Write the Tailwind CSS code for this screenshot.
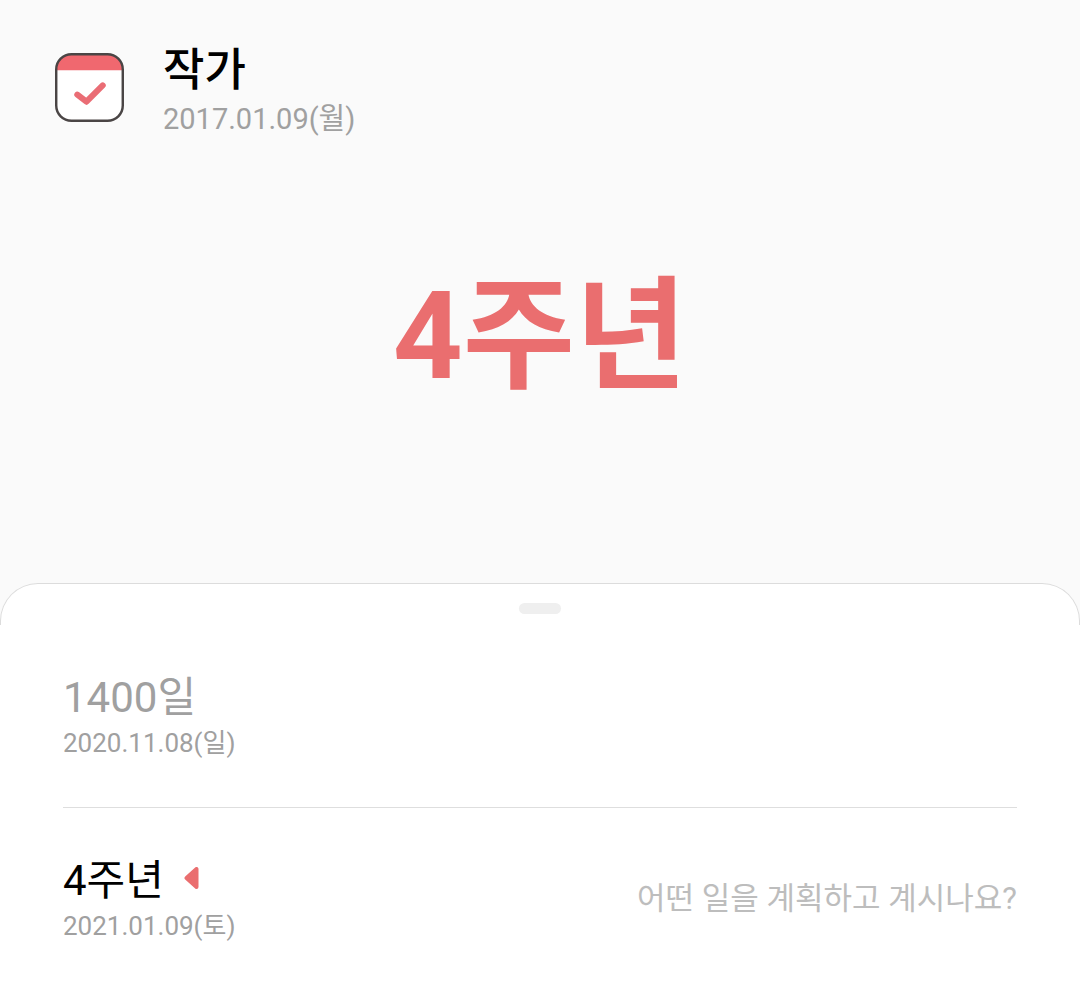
<!DOCTYPE html>
<html lang="ko">
<head>
  <meta charset="UTF-8">
  <title>작가</title>
  <meta name="viewport" content="width=device-width, initial-scale=1.0">
  <script src="https://cdn.jsdelivr.net/npm/@tailwindcss/browser@4"></script>
</head>
<body class="min-h-screen flex flex-col bg-[#fafafa] font-[Roboto,'Noto_Sans_CJK_KR',sans-serif]">
  <header class="flex items-start gap-[39px] px-[55px] pt-[42px]">
    <svg class="mt-[11px] size-[69px] shrink-0" viewBox="0 0 68 68" fill="none" aria-hidden="true">
      <rect x="1" y="1" width="66" height="66" rx="15" fill="#fff" />
      <path d="M1 17V16A15 15 0 0 1 16 1H52A15 15 0 0 1 67 16V17Z" fill="#f0686f" />
      <rect x="1.2" y="1.2" width="65.6" height="65.6" rx="15" stroke="#4a4545" stroke-width="2.4" />
      <path d="M22 41L31 48L47 32" stroke="#ea6d75" stroke-width="6" stroke-linecap="round" stroke-linejoin="round" />
    </svg>
    <div>
      <h1 class="text-[45px] leading-[58px] font-medium text-black">작가</h1>
      <p class="text-[29px] leading-[38px] text-[#a0a0a0]">2017.01.09(월)</p>
    </div>
  </header>

  <section class="flex h-[445px] items-center justify-center pb-12">
    <p class="text-[122px] leading-[160px] font-bold text-[#ea6e6f]">4주년</p>
  </section>

  <main class="grow rounded-t-[38px] bg-white">
    <div class="h-[42px] rounded-t-[38px] border-x border-t border-[#dcdcdc] pt-[19px]">
      <div class="mx-auto h-[11px] w-[42px] rounded-full bg-[#efefef]"></div>
    </div>
    <ul class="mx-[63px] mt-[46px] divide-y divide-[#dedede]">
      <li class="pb-[46px]">
        <h2 class="text-[42px] leading-[54px] text-[#a0a0a0]">1400일</h2>
        <p class="text-[26px] leading-[36px] text-[#a0a0a0]">2020.11.08(일)</p>
      </li>
      <li class="flex items-center justify-between pt-[46px]">
        <div>
          <h2 class="flex items-center gap-5 text-[42px] leading-[54px] text-black">4주년
            <svg class="h-7 w-4" viewBox="0 0 16 28" aria-hidden="true">
              <path d="M2.500 11L12.500 2V20Z" fill="#ea6e6f" stroke="#ea6e6f" stroke-width="4" stroke-linejoin="round" />
            </svg>
          </h2>
          <p class="text-[26px] leading-[36px] text-[#a0a0a0]">2021.01.09(토)</p>
        </div>
        <p class="text-[31px] leading-[40px] text-[#bdbdbd]">어떤 일을 계획하고 계시나요?</p>
      </li>
    </ul>
  </main>
</body>
</html>
